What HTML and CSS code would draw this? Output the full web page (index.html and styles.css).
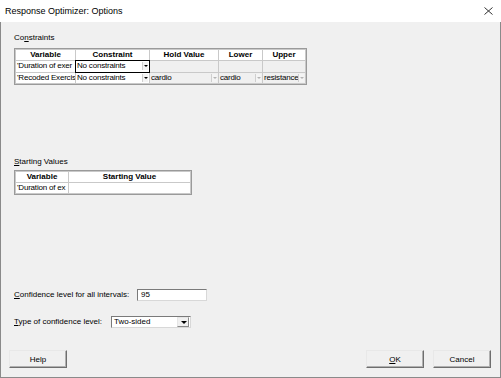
FILE: index.html
```html
<!DOCTYPE html>
<html lang="en">
<head>
  <meta charset="UTF-8">
  <title>Response Optimizer: Options</title>
  <link rel="stylesheet" href="styles.css">
</head>
<body>

<div class="window">
  <div class="titlebar">
    <span class="title">Response Optimizer: Options</span>
    <svg class="close" width="9" height="8" viewBox="0 0 9 8">
      <path d="M0.5 0.5 L8.5 7.5 M8.5 0.5 L0.5 7.5" stroke="#333" stroke-width="1" fill="none"/>
    </svg>
  </div>

  <div class="content">
    <div class="label first">Co<u>n</u>straints</div>
    <div class="grid constraints">
      <div class="head">Variable</div>
      <div class="head">Constraint</div>
      <div class="head">Hold Value</div>
      <div class="head">Lower</div>
      <div class="head">Upper</div>

      <div class="cell">'Duration of exer</div>
      <div class="cell combo active">No constraints<span class="arrow"></span></div>
      <div class="cell off"></div>
      <div class="cell off"></div>
      <div class="cell off"></div>

      <div class="cell">'Recoded Exercis</div>
      <div class="cell combo">No constraints<span class="arrow"></span></div>
      <div class="cell off combo">cardio<span class="arrow dim"></span></div>
      <div class="cell off combo">cardio<span class="arrow dim"></span></div>
      <div class="cell off combo">resistance<span class="arrow dim"></span></div>
    </div>

    <div class="label second"><u>S</u>tarting Values</div>
    <div class="grid starting">
      <div class="head">Variable</div>
      <div class="head">Starting Value</div>
      <div class="cell">'Duration of ex</div>
      <div class="cell"></div>
    </div>

    <div class="field conf">
      <span class="field-label"><u>C</u>onfidence level for all intervals:</span>
      <div class="textbox">95</div>
    </div>

    <div class="field type">
      <span class="field-label"><u>T</u>ype of confidence level:</span>
      <div class="select">Two-sided<span class="select-btn"></span></div>
    </div>

    <div class="buttons">
      <button class="btn">Help</button>
      <span class="spacer"></span>
      <button class="btn"><u>O</u>K</button>
      <button class="btn">Cancel</button>
    </div>
  </div>
</div>

</body>
</html>
```

FILE: styles.css
```css
body {
  margin: 0;
  padding: 0;
  font-family: "Liberation Sans", Arial, sans-serif;
  font-size: 8px;
  color: #000;
  background: #fff;
}
.window {
  width: 501px;
  height: 378px;
  box-sizing: border-box;
  border: 1px solid #8a8a8a;
  border-top: none;
  background: #f0f0f0;
  display: flex;
  flex-direction: column;
}
.titlebar {
  height: 22px;
  background: #fff;
  display: flex;
  align-items: center;
  justify-content: space-between;
  padding: 0 7px 0 5px;
  margin: 0 -1px;
}
.title {
  font-size: 9px;
  color: #000;
}
.close {
  display: block;
  margin-right: 1px;
}
.content {
  flex: 1;
  display: flex;
  flex-direction: column;
  padding: 0 0 0 13px;
}
u {
  text-decoration: underline;
  text-underline-offset: 1px;
}
.label {
  height: 12px;
  line-height: 12px;
}
.label.first {
  margin-top: 10px;
}
.label.second {
  margin-top: 71px;
}
.grid {
  display: grid;
  gap: 1px;
  background: #c9c9c9;
  border: 1px solid #9a9a9a;
  padding: 1px;
  align-self: flex-start;
}
.constraints {
  margin-top: 4px;
  grid-template-columns: 59px 73px 68px 43px 42px;
  grid-template-rows: 10px 11px 10px;
}
.starting {
  margin-top: 2px;
  grid-template-columns: 52px 121px;
  grid-template-rows: 10px 10px;
}
.head {
  background: #fff;
  font-weight: bold;
  text-align: center;
  line-height: 10px;
}
.cell {
  background: #fff;
  line-height: 10px;
  padding-left: 1px;
  letter-spacing: -0.2px;
  white-space: nowrap;
  overflow: hidden;
  position: relative;
}
.cell.off {
  background: #f0f0f0;
}
.combo.active {
  outline: 1px solid #000;
  z-index: 1;
}
.arrow {
  position: absolute;
  right: 1px;
  top: 1px;
  width: 5px;
  height: 8px;
  background: #f4f4f4;
  border: 1px solid #cfcfcf;
  border-width: 0 0 0 1px;
}
.arrow::after {
  content: "";
  position: absolute;
  left: 1px;
  top: 3px;
  border-left: 2px solid transparent;
  border-right: 2px solid transparent;
  border-top: 2px solid #000;
}
.arrow.dim::after {
  border-top-color: #b4b4b4;
}
.field {
  display: flex;
  align-items: center;
  height: 12px;
}
.field-label {
  line-height: 12px;
}
.conf {
  margin-top: 94px;
}
.conf .field-label {
  width: 123px;
}
.type {
  margin-top: 15px;
}
.type .field-label {
  width: 97px;
}
.textbox {
  width: 70px;
  height: 12px;
  box-sizing: border-box;
  background: #fff;
  border: 1px solid #7a7a7a;
  border-color: #7a7a7a #d8d8d8 #d8d8d8 #7a7a7a;
  padding-left: 3px;
  line-height: 10px;
}
.select {
  width: 80px;
  height: 12px;
  box-sizing: border-box;
  background: #fff;
  border: 1px solid #7a7a7a;
  border-color: #7a7a7a #d8d8d8 #d8d8d8 #7a7a7a;
  padding-left: 2px;
  line-height: 10px;
  position: relative;
}
.select-btn {
  position: absolute;
  right: 1px;
  top: 0;
  width: 12px;
  height: 10px;
  box-sizing: border-box;
  background: #f0f0f0;
  border: 1px solid #e6e6e6;
  border-right-color: #8a8a8a;
  border-bottom-color: #8a8a8a;
}
.select-btn::after {
  content: "";
  position: absolute;
  left: 3px;
  top: 3px;
  border-left: 3px solid transparent;
  border-right: 3px solid transparent;
  border-top: 3px solid #000;
}
.buttons {
  display: flex;
  margin-top: 22px;
  margin-left: -5px;
  padding-right: 9px;
  gap: 9px;
}
.spacer {
  flex: 1;
}
.btn {
  width: 58px;
  height: 18px;
  padding: 0;
  margin: 0;
  font-family: inherit;
  font-size: 8px;
  color: #000;
  background: #f0f0f0;
  border: 1px solid;
  border-color: #e8e8e8 #6e6e6e #6e6e6e #e8e8e8;
  box-shadow: inset -1px -1px 0 #b0b0b0;
}
```
